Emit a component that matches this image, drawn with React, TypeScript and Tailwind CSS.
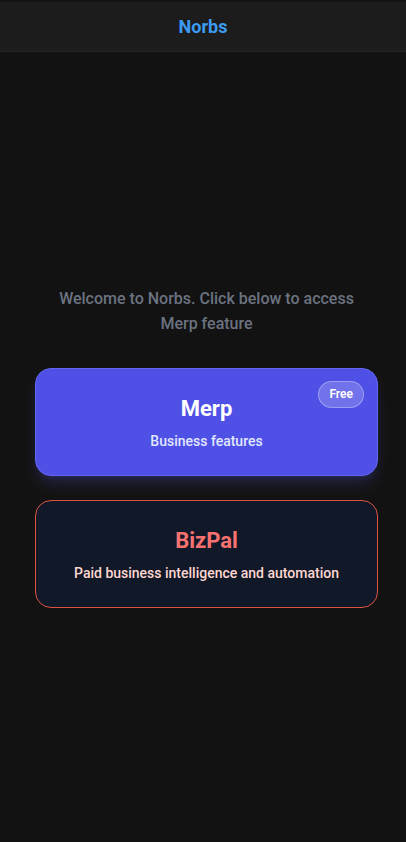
export default function App() {
  return (
    <div className="flex min-h-[842px] flex-col bg-[#121212] font-['Roboto','Liberation_Sans',sans-serif]">
      <header className="flex h-[52px] items-center justify-center border-t-2 border-b border-t-[#141414] border-b-[#262626] bg-[#1c1c1c]">
        <h1 className="text-lg font-bold text-[#3d9bf3]">Norbs</h1>
      </header>

      <main className="flex flex-1 flex-col justify-center pl-[35px] pr-[28px]">
        <p className="mb-8 px-4 text-center text-base leading-[25px] font-medium text-[#6b7280]">
          Welcome to Norbs. Click below to access Merp feature
        </p>

        <div className="flex flex-col gap-6">
          <button className="relative flex h-[108px] flex-col items-center justify-center rounded-2xl border border-[#6366f1] bg-[#4f51e6] shadow-lg shadow-indigo-500/20">
            <span className="absolute top-[12px] right-[13px] rounded-full border border-white/30 bg-white/20 px-[10px] py-[4px] text-xs leading-[17px] font-semibold text-white">
              Free
            </span>
            <span className="text-[22px] leading-8 font-bold text-white">Merp</span>
            <span className="mt-[6px] text-sm leading-5 font-medium text-[#e0e7ff]">Business features</span>
          </button>

          <button className="flex h-[108px] flex-col items-center justify-center rounded-2xl border border-[#dd5240] bg-[#111827]">
            <span className="text-[22px] leading-8 font-bold text-[#f87171]">BizPal</span>
            <span className="mt-[6px] text-sm leading-5 font-medium text-[#fed7d2]">
              Paid business intelligence and automation
            </span>
          </button>
        </div>
      </main>
    </div>
  );
}
